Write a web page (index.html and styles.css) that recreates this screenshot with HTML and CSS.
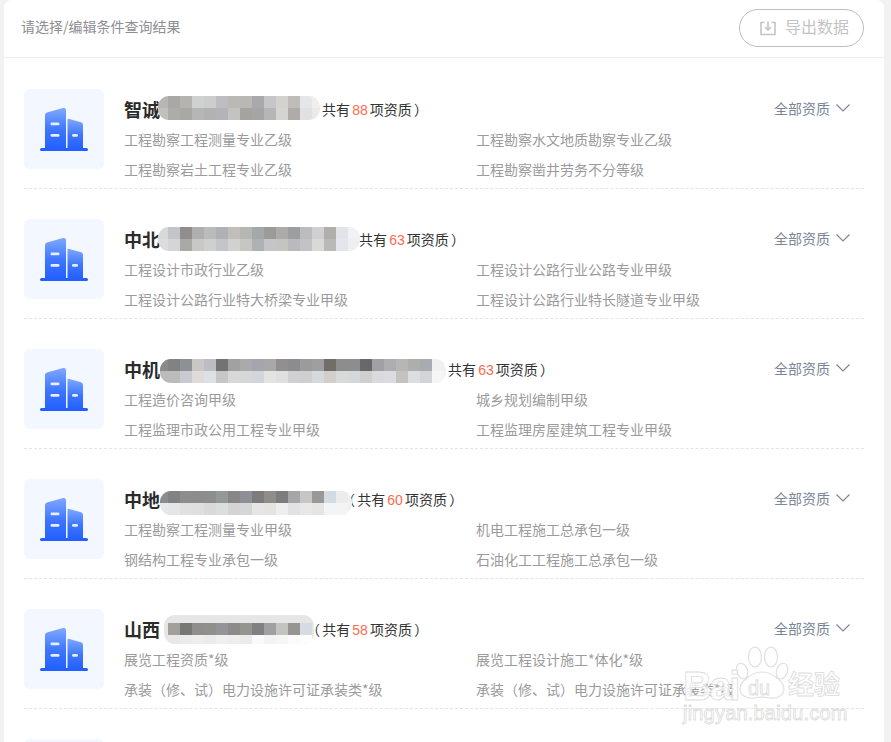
FILE: index.html
```html
<!DOCTYPE html>
<html lang="zh-CN">
<head>
<meta charset="utf-8">
<title>查询结果</title>
<link rel="stylesheet" href="styles.css">
</head>
<body>
<svg class="defs" width="0" height="0" aria-hidden="true">
  <defs>
    <linearGradient id="bld" x1="0" y1="0" x2="0" y2="1">
      <stop offset="0" stop-color="#7fa8ff"/>
      <stop offset="0.55" stop-color="#3d75ff"/>
      <stop offset="1" stop-color="#2360ff"/>
    </linearGradient>
    <symbol id="building" viewBox="0 0 80 80">
      <path d="M21 26q0-2 2-2.600l16-4.300q3-.7 3 2.100V60H21z" fill="url(#bld)"/>
      <path d="M43.500 30.500q0-1 1-.7l12.500 3.400q2 .6 2 2.600V60H43.500z" fill="url(#bld)"/>
      <rect x="16" y="59" width="48" height="3" rx="1.500" fill="#2360ff"/>
      <rect x="26.500" y="33.500" width="9" height="2.800" rx="1.400" fill="#e6eeff"/>
      <rect x="26.500" y="45" width="9" height="2.800" rx="1.400" fill="#e6eeff"/>
      <rect x="48" y="45" width="6" height="2.800" rx="1.400" fill="#e6eeff"/>
    </symbol>
  </defs>
</svg>
<main class="card">
  <header class="head">
    <p class="hint">请选择/编辑条件查询结果</p>
    <button class="export" type="button">
      <svg class="export-icon" viewBox="0 0 16 16" width="16" height="16" fill="none" stroke="#c4c4c4" stroke-width="1.600"><path d="M4.500 2.500H1v12h14v-12h-3.500"/><path d="M8 1.500v8M5 7l3 3 3-3"/></svg>
      <span class="export-label">导出数据</span>
    </button>
  </header>
  <section class="list">
    <article class="row">
      <div class="thumb"><svg width="80" height="80"><use href="#building"/></svg></div>
      <div class="body">
        <div class="title-line">
          <h2 class="name">智诚</h2>
          <div class="mosaic mosaic-a" aria-hidden="true">
            <i style="background:#b8b6b4"></i><i style="background:#a9a8a7"></i><i style="background:#b5b3af"></i><i style="background:#cfd0d0"></i><i style="background:#cdcdcd"></i><i style="background:#bebdc0"></i><i style="background:#bbb9b6"></i><i style="background:#bab8b4"></i><i style="background:#a9a9ab"></i><i style="background:#c6c6c9"></i><i style="background:#d3d2cf"></i><i style="background:#bfbdba"></i><i style="background:#e4e6e8"></i><i style="background:#f0efed"></i>
            <i style="background:#c2c0bd"></i><i style="background:#aeaca9"></i><i style="background:#aaa8a3"></i><i style="background:#b5b7b7"></i><i style="background:#b2b2b0"></i><i style="background:#b3b3b9"></i><i style="background:#c5c3bf"></i><i style="background:#a6a39e"></i><i style="background:#a6a5a5"></i><i style="background:#b7b6b7"></i><i style="background:#d5d4d0"></i><i style="background:#aeaba9"></i><i style="background:#dfe1e4"></i><i style="background:#eceae8"></i>
          </div>
          <span class="count">共有 <em>88</em> 项资质 ）</span>
        </div>
        <ul class="quals">
          <li>工程勘察工程测量专业乙级</li><li>工程勘察水文地质勘察专业乙级</li>
          <li>工程勘察岩土工程专业乙级</li><li>工程勘察凿井劳务不分等级</li>
        </ul>
      </div>
      <button class="all" type="button"><span>全部资质</span><svg width="14" height="8" viewBox="0 0 14 8" fill="none" stroke="#7b8698" stroke-width="1.200"><path d="M.5.500l6.500 6.500 6.500-6.500"/></svg></button>
    </article>
    <article class="row">
      <div class="thumb"><svg width="80" height="80"><use href="#building"/></svg></div>
      <div class="body">
        <div class="title-line">
          <h2 class="name">中北</h2>
          <div class="mosaic mosaic-b" aria-hidden="true">
            <i style="background:#d8d8d8"></i><i style="background:#c4c5c8"></i><i style="background:#908f8e"></i><i style="background:#afafb0"></i><i style="background:#babcbc"></i><i style="background:#b0b1b5"></i><i style="background:#c0bfbb"></i><i style="background:#b6b6b2"></i><i style="background:#a4a8a9"></i><i style="background:#9d9a9a"></i><i style="background:#adaba8"></i><i style="background:#9d9ea1"></i><i style="background:#bcbcbf"></i><i style="background:#d0d0d0"></i><i style="background:#b0afac"></i><i style="background:#e2e4ea"></i><i style="background:#f2f2f2"></i>
            <i style="background:#dcdcdc"></i><i style="background:#d4d5d8"></i><i style="background:#aaa9a5"></i><i style="background:#c9c8c6"></i><i style="background:#cfcfcd"></i><i style="background:#c2c5c9"></i><i style="background:#d2d1cd"></i><i style="background:#c6c6c2"></i><i style="background:#adb2b4"></i><i style="background:#c5c5c9"></i><i style="background:#c6c4c0"></i><i style="background:#b9babd"></i><i style="background:#c3c3c7"></i><i style="background:#dad9d7"></i><i style="background:#b9b9b8"></i><i style="background:#e3e6ed"></i><i style="background:#efefef"></i>
          </div>
          <span class="count">共有 <em>63</em> 项资质 ）</span>
        </div>
        <ul class="quals">
          <li>工程设计市政行业乙级</li><li>工程设计公路行业公路专业甲级</li>
          <li>工程设计公路行业特大桥梁专业甲级</li><li>工程设计公路行业特长隧道专业甲级</li>
        </ul>
      </div>
      <button class="all" type="button"><span>全部资质</span><svg width="14" height="8" viewBox="0 0 14 8" fill="none" stroke="#7b8698" stroke-width="1.200"><path d="M.5.500l6.500 6.500 6.500-6.500"/></svg></button>
    </article>
    <article class="row">
      <div class="thumb"><svg width="80" height="80"><use href="#building"/></svg></div>
      <div class="body">
        <div class="title-line">
          <h2 class="name">中机</h2>
          <div class="mosaic mosaic-c" aria-hidden="true">
            <i style="background:#8a8a8c"></i><i style="background:#808284"></i><i style="background:#8d9194"></i><i style="background:#c9c6c4"></i><i style="background:#bcbdc2"></i><i style="background:#737371"></i><i style="background:#a1a1a2"></i><i style="background:#a9abab"></i><i style="background:#a5a6ad"></i><i style="background:#a9a8a9"></i><i style="background:#928f8d"></i><i style="background:#8b8c90"></i><i style="background:#9b9b9a"></i><i style="background:#9e9fa0"></i><i style="background:#716e6a"></i><i style="background:#8e8d8b"></i><i style="background:#8c8d91"></i><i style="background:#686868"></i><i style="background:#a0a1a6"></i><i style="background:#aeaeb2"></i><i style="background:#b6b6b6"></i><i style="background:#afaeab"></i><i style="background:#a8abb1"></i><i style="background:#f0f0f0"></i>
            <i style="background:#bbbbbb"></i><i style="background:#bbbbbb"></i><i style="background:#c8cad0"></i><i style="background:#dedbd9"></i><i style="background:#dfe0e4"></i><i style="background:#c6c6c4"></i><i style="background:#d8d8d8"></i><i style="background:#d6d7d8"></i><i style="background:#d4d5da"></i><i style="background:#e3e3df"></i><i style="background:#dfdfe2"></i><i style="background:#d0d0d2"></i><i style="background:#cfcfcf"></i><i style="background:#d7d8db"></i><i style="background:#d2cfcb"></i><i style="background:#d8dada"></i><i style="background:#d5d8d9"></i><i style="background:#cfcfcf"></i><i style="background:#dadade"></i><i style="background:#dcdce0"></i><i style="background:#c4c3c0"></i><i style="background:#dcdde0"></i><i style="background:#d2d4d8"></i><i style="background:#f6f6f6"></i>
          </div>
          <span class="count">共有 <em>63</em> 项资质 ）</span>
        </div>
        <ul class="quals">
          <li>工程造价咨询甲级</li><li>城乡规划编制甲级</li>
          <li>工程监理市政公用工程专业甲级</li><li>工程监理房屋建筑工程专业甲级</li>
        </ul>
      </div>
      <button class="all" type="button"><span>全部资质</span><svg width="14" height="8" viewBox="0 0 14 8" fill="none" stroke="#7b8698" stroke-width="1.200"><path d="M.5.500l6.500 6.500 6.500-6.500"/></svg></button>
    </article>
    <article class="row">
      <div class="thumb"><svg width="80" height="80"><use href="#building"/></svg></div>
      <div class="body">
        <div class="title-line">
          <h2 class="name">中地</h2>
          <div class="mosaic mosaic-d" aria-hidden="true">
            <i style="background:#8c8b8b"></i><i style="background:#7f8384"></i><i style="background:#8e8c8c"></i><i style="background:#8d8c8a"></i><i style="background:#8d8e8c"></i><i style="background:#939898"></i><i style="background:#888686"></i><i style="background:#8c9096"></i><i style="background:#7e7b7b"></i><i style="background:#8f8c89"></i><i style="background:#7b7d80"></i><i style="background:#a5a5aa"></i><i style="background:#c8c6c5"></i><i style="background:#9a9896"></i><i style="background:#d3dbe3"></i><i style="background:#ececec"></i>
            <i style="background:#e8e8e8"></i><i style="background:#e6e6e6"></i><i style="background:#e0e0e0"></i><i style="background:#dfdfdf"></i><i style="background:#d9d9d9"></i><i style="background:#dcdddd"></i><i style="background:#d4d4d4"></i><i style="background:#d5d6d8"></i><i style="background:#e6e6e6"></i><i style="background:#e4e4e2"></i><i style="background:#eeeeef"></i><i style="background:#e2e2e4"></i><i style="background:#e9e8e8"></i><i style="background:#e6e5e4"></i><i style="background:#f3f4f6"></i><i style="background:#f4f4f4"></i>
          </div>
          <span class="count">（ 共有 <em>60</em> 项资质 ）</span>
        </div>
        <ul class="quals">
          <li>工程勘察工程测量专业甲级</li><li>机电工程施工总承包一级</li>
          <li>钢结构工程专业承包一级</li><li>石油化工工程施工总承包一级</li>
        </ul>
      </div>
      <button class="all" type="button"><span>全部资质</span><svg width="14" height="8" viewBox="0 0 14 8" fill="none" stroke="#7b8698" stroke-width="1.200"><path d="M.5.500l6.500 6.500 6.500-6.500"/></svg></button>
    </article>
    <article class="row">
      <div class="thumb"><svg width="80" height="80"><use href="#building"/></svg></div>
      <div class="body">
        <div class="title-line">
          <h2 class="name">山西</h2>
          <div class="mosaic mosaic-e" aria-hidden="true">
            <i style="background:#a49f98"></i><i style="background:#777876"></i><i style="background:#8f8e8c"></i><i style="background:#918f8c"></i><i style="background:#92949a"></i><i style="background:#8e8a8a"></i><i style="background:#96948e"></i><i style="background:#7f8082"></i><i style="background:#a0a0a4"></i><i style="background:#c4c3bf"></i><i style="background:#969594"></i><i style="background:#d4dbe3"></i>
            <i style="background:#e8e8e8"></i><i style="background:#ebebeb"></i><i style="background:#eeeeee"></i><i style="background:#ebebeb"></i><i style="background:#f0f0f0"></i><i style="background:#eeeeee"></i><i style="background:#ebebeb"></i><i style="background:#fafafa"></i><i style="background:#f3f3f3"></i><i style="background:#f6f6f6"></i><i style="background:#fbfbfb"></i><i style="background:#fdfdfd"></i>
          </div>
          <span class="count">（ 共有 <em>58</em> 项资质 ）</span>
        </div>
        <ul class="quals">
          <li>展览工程资质*级</li><li>展览工程设计施工*体化*级</li>
          <li>承装（修、试）电力设施许可证承装类*级</li><li>承装（修、试）电力设施许可证承装类*级</li>
        </ul>
      </div>
      <button class="all" type="button"><span>全部资质</span><svg width="14" height="8" viewBox="0 0 14 8" fill="none" stroke="#7b8698" stroke-width="1.200"><path d="M.5.500l6.500 6.500 6.500-6.500"/></svg></button>
    </article>
    <article class="row">
      <div class="thumb"><svg width="80" height="80"><use href="#building"/></svg></div>
    </article>
  </section>
</main>
<aside class="watermark" aria-hidden="true">
  <svg class="paw" width="60" height="58" viewBox="0 0 60 58" fill="rgba(255,255,255,.75)" stroke="#e0e0e0" stroke-width="1.200">
    <ellipse cx="19" cy="12" rx="6.500" ry="10"/>
    <ellipse cx="35" cy="12" rx="6.500" ry="10"/>
    <ellipse cx="6" cy="26" rx="5.500" ry="8" transform="rotate(-20 6 26)"/>
    <ellipse cx="46" cy="26" rx="5.500" ry="8" transform="rotate(20 46 26)"/>
    <path d="M26 27c9 0 22 9 22 17 0 7-8 10-14 9-5-1-11-1-16 0-6 1-14-2-14-9 0-8 13-17 22-17z"/>
  </svg>
  <span class="wm-bai">Bai</span>
  <span class="wm-du">du</span>
  <span class="wm-cn">经验</span>
  <span class="wm-url">jingyan.baidu.com</span>
</aside>
</body>
</html>
```

FILE: styles.css
```css
* { box-sizing: border-box; }
html, body { height: 742px; overflow: hidden; }
body {
  margin: 0;
  padding: 0 7px 0 4px;
  background: #f2f2f2;
  font-family: "Noto Sans CJK SC", "Liberation Sans", sans-serif;
  position: relative;
}
.defs { position: absolute; }
.card {
  background: #fff;
  border-radius: 8px 8px 0 0;
  min-height: 742px;
}
.head {
  height: 58px;
  padding: 9px 20px 0 17px;
  border-bottom: 1px solid #eeeeee;
  display: flex;
  justify-content: space-between;
  align-items: flex-start;
}
.hint {
  margin: 7px 0 0;
  font-size: 14px;
  line-height: 20px;
  color: #8e8e93;
}
.export {
  width: 125px;
  height: 38px;
  border: 1px solid #bdbdbd;
  border-radius: 19px;
  background: #fff;
  display: flex;
  align-items: center;
  gap: 9px;
  padding: 0 0 0 20px;
  font: inherit;
  font-size: 16px;
  color: #c4c4c4;
}
.export-label { margin-bottom: 4px; }
.list { padding: 1px 20px 0; }
.row {
  height: 130px;
  padding-top: 30px;
  border-bottom: 1px dashed #e4e4e4;
  display: flex;
  align-items: flex-start;
  position: relative;
}
.thumb {
  width: 80px;
  height: 80px;
  flex: none;
  background: #f3f7ff;
  border-radius: 6px;
  margin-right: 20px;
}
.thumb svg { display: block; }
.body { flex: 1; min-width: 0; padding-top: 5px; }
.title-line {
  display: flex;
  align-items: center;
  height: 30px;
}
.name {
  margin: 0;
  font-size: 18px;
  line-height: 30px;
  font-weight: 700;
  color: #2b2b2b;
  white-space: nowrap;
}
.mosaic {
  display: grid;
  grid-auto-rows: 12px;
  height: 24px;
  border-radius: 11px;
  overflow: hidden;
  position: relative;
  z-index: 1;
  flex: none;
}
.mosaic i { display: block; }
.mosaic-a {
  width: 162px;
  margin: 0 0 2px -2px;
  grid-template-columns: 10px repeat(13, 12px);
}
.mosaic-b {
  width: 202px;
  margin-left: -2px;
  grid-template-columns: 10px repeat(16, 12px);
}
.mosaic-c {
  width: 286px;
  margin: 4px 0 0;
  background: #f2f2f2;
  grid-template-columns: 8px repeat(23, 12px);
}
.mosaic-d {
  width: 192px;
  margin: 8px 0 0;
  background: #f0f0f0;
  grid-template-columns: 8px repeat(15, 12px);
}
.mosaic-e {
  width: 150px;
  height: 29px;
  margin-left: 4px;
  padding: 8px 0 0 4px;
  background: #e6e6e6;
  grid-template-columns: repeat(12, 12px);
}
.count {
  margin-left: 2px;
  font-size: 14px;
  color: #333;
  white-space: nowrap;
  word-spacing: -1px;
}
.count em {
  font-family: "Liberation Sans", sans-serif;
  font-style: normal;
  color: #fb6a52;
}
.mosaic-b + .count { margin-left: -1px; }
.mosaic-d + .count { margin-left: -11px; }
.mosaic-e + .count { margin-left: -8px; }
.quals {
  list-style: none;
  margin: 0;
  padding: 0;
  display: grid;
  grid-template-columns: 352px 352px;
  grid-auto-rows: 30px;
  font-size: 14px;
  line-height: 30px;
  color: #9b9b9b;
  white-space: nowrap;
}
.all {
  position: absolute;
  top: 39px;
  right: 14px;
  display: flex;
  align-items: center;
  gap: 6px;
  padding: 0;
  border: 0;
  background: none;
  font: inherit;
  font-size: 14px;
  line-height: 20px;
  color: #7b8698;
}
.watermark {
  position: absolute;
  left: 683px;
  top: 645px;
  width: 162px;
  height: 78px;
}
.paw { position: absolute; left: 53px; top: 0; }
.wm-bai, .wm-du, .wm-cn, .wm-url {
  position: absolute;
  font-family: "Liberation Sans", sans-serif;
  color: rgba(255, 255, 255, .8);
  -webkit-text-stroke: .8px #dcdcdc;
  line-height: 1;
  white-space: nowrap;
}
.wm-bai { left: 0; top: 21px; font-size: 40px; font-weight: 700; letter-spacing: -2.500px; }
.wm-du { left: 65px; top: 33px; font-size: 20px; }
.wm-cn { left: 105px; top: 25px; font-size: 26px; font-family: "Noto Sans CJK SC", sans-serif; font-weight: 700; }
.wm-url { left: 0; top: 58px; font-size: 20px; letter-spacing: .2px; }
```
